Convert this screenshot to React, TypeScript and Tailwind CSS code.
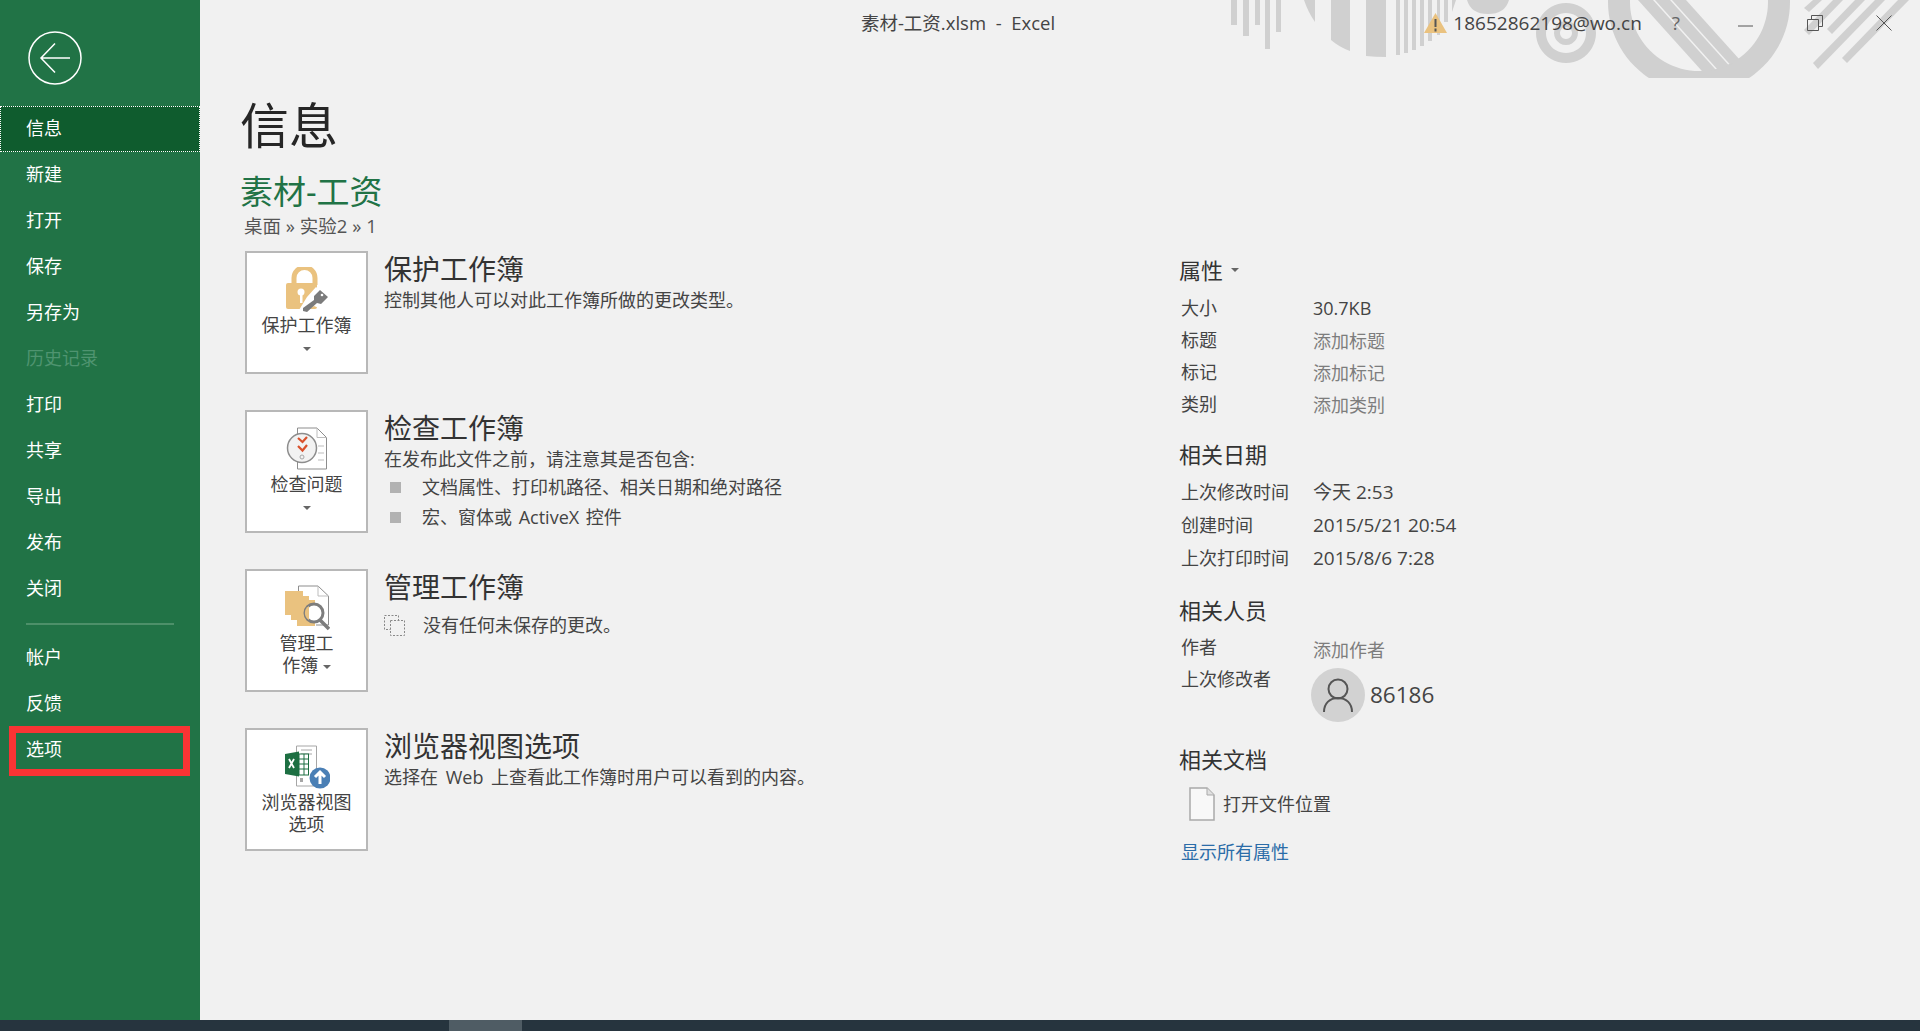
import React from "react";

const FONT = "font-['Open_Sans','Noto_Sans_CJK_SC',sans-serif]";

function Caret({ className = "" }: { className?: string }) {
  return <span className={`inline-block w-0 h-0 border-l-[4px] border-r-[4px] border-t-[4px] border-l-transparent border-r-transparent border-t-[#666] ${className}`} />;
}

function LockIcon() {
  return (
    <svg width="44" height="46" viewBox="0 0 44 46" className="block">
      <path d="M9 18v-7a10.500 10.500 0 0 1 21 0v7" fill="none" stroke="#eac27f" strokeWidth="5" />
      <rect x="1" y="16" width="31" height="26" rx="2" fill="#eac27f" />
      <circle cx="16" cy="25" r="3.500" fill="#fff" />
      <rect x="15" y="26" width="2.500" height="10" fill="#fff" />
      <path d="M22 30l9-10 12 10-9 11-5-2-11 7-4-3z" fill="#fff" />
      <path d="M29 29l6-6 8 7-7 7-4-1-10 9-4-1 0-3 11-8z" fill="#7b7b7b" />
      <circle cx="37" cy="28" r="1.300" fill="#fff" />
    </svg>
  );
}

function InspectIcon() {
  return (
    <svg width="42" height="44" viewBox="0 0 42 44" className="block">
      <path d="M11.500 1H31l9.500 9.500V42H11.500z" fill="#fff" stroke="#8d8d8d" />
      <path d="M31 1v9.500h9.500M32 19h6M32 26h6M32 33h6" fill="none" stroke="#bdbdbd" />
      <circle cx="16" cy="21" r="14.500" fill="#f2f2f2" stroke="#8d8d8d" strokeWidth="1.500" />
      <path d="M12 11l4.500 4L21 10M12 19l4.500 4.500L21 18" fill="none" stroke="#d9512c" strokeWidth="2.200" />
      <circle cx="16" cy="30" r="2" fill="none" stroke="#a6a6a6" />
    </svg>
  );
}

function ManageIcon() {
  return (
    <svg width="46" height="46" viewBox="0 0 46 46" className="block">
      <path d="M14.500 1H34l10.500 10V40H14.500z" fill="#fff" stroke="#8d8d8d" />
      <path d="M34 1v10h10.500" fill="none" stroke="#bdbdbd" />
      <rect x="1" y="6" width="18" height="24" fill="#eac27f" />
      <rect x="7" y="11" width="19" height="25" fill="#fff" />
      <rect x="7" y="11" width="18" height="24" fill="#eac27f" />
      <rect x="13" y="15" width="19" height="26" fill="#fff" />
      <rect x="13" y="15" width="18" height="26" fill="#eac27f" />
      <circle cx="30" cy="28" r="9" fill="#fff" stroke="#7d7d7d" strokeWidth="3" />
      <path d="M25 21a8 8 0 0 0 0 14v-14z" fill="#eac27f" />
      <path d="M36 35l9 9" stroke="#7d7d7d" strokeWidth="3.500" />
    </svg>
  );
}

function BrowserIcon() {
  return (
    <svg width="46" height="44" viewBox="0 0 46 44" className="block">
      <path d="M12.500 1h20v40h-20z" fill="#fff" stroke="#a6a6a6" />
      <path d="M17 5h11M17 9h11" stroke="#a6a6a6" />
      <rect x="16" y="33" width="3" height="4" fill="#a6a6a6" />
      <path d="M1 9l14-2.500v25L1 29z" fill="#1d6f42" />
      <rect x="15" y="9" width="9.500" height="21" fill="#fff" stroke="#1d6f42" />
      <path d="M15 14h10M15 19h10M15 24h10M20 9v21" stroke="#1d6f42" />
      <path d="M5 14l5 9M10 14l-5 9" stroke="#fff" strokeWidth="1.800" />
      <circle cx="36" cy="33" r="10.500" fill="#4a7fb5" />
      <path d="M36 39v-11M31 32l5-5 5 5" fill="none" stroke="#fff" strokeWidth="3" />
    </svg>
  );
}

function Decoration() {
  return (
    <svg width="720" height="80" viewBox="1200 0 720 80" className="absolute right-0 top-0 pointer-events-none">
      <defs>
        <clipPath id="inner"><circle cx="1699" cy="2" r="70" /></clipPath>
        <clipPath id="cut"><rect x="1600" y="0" width="200" height="78" /></clipPath>
      </defs>
      <g fill="#d0d0d0">
        <rect x="1231" y="0" width="6" height="25" />
        <rect x="1243" y="0" width="6" height="36" />
        <rect x="1255" y="0" width="5" height="25" />
        <rect x="1265" y="0" width="5" height="49" />
        <rect x="1276" y="0" width="5" height="32" />
        <path d="M1304 0h11v22q-7-10-11-22z" />
        <path d="M1331 0h19v51q-11-4-19-11z" />
        <path d="M1366 0h20v57q-11 0-20-1z" />
        <rect x="1396" y="0" width="4" height="55" />
        <rect x="1404" y="0" width="4" height="53" />
        <rect x="1412" y="0" width="4" height="50" />
        <rect x="1420" y="0" width="4" height="46" />
        <rect x="1428" y="0" width="4" height="41" />
        <rect x="1437" y="0" width="3" height="35" />
        <rect x="1444" y="0" width="4" height="22" />
        <path d="M1452 0h4l-4 12z" />
        <path d="M1467 0h42q-4 14-21 14t-21-14z" />
        <path fillRule="evenodd" d="M1566 3a30 30 0 1 0 .01 0zM1566 13a20 20 0 1 1-.01 0zM1566 21a12 12 0 1 0 .01 0zM1566 27a6 6 0 1 1-.01 0z" />
        <g clipPath="url(#cut)">
          <path fillRule="evenodd" d="M1699-89a91 91 0 1 0 .01 0zM1699-67a69 69 0 1 1-.01 0z" />
        </g>
        <g clipPath="url(#inner)">
          <path d="M1638 0h15l72 80h-15z" />
          <path d="M1655 0h15l72 80h-15z" />
          <path d="M1672 0h14l72 80h-14z" />
        </g>
        <path d="M1813 0h9l-13 12-5-4z" />
        <path d="M1833 0h10l-34 35-5-5z" />
        <path d="M1855 0h10l-33 34-5-5z" />
        <path d="M1875 0h10l-67 69-5-6z" />
        <path d="M1898 0h11l-62 63-5-5z" />
      </g>
    </svg>
  );
}

function Action({ icon, label, title, children, labelNode }: { icon: React.ReactNode; label?: string; title: string; children: React.ReactNode; labelNode?: React.ReactNode }) {
  return (
    <div className="flex h-[159px]">
      <div className="w-[123px] h-[123px] bg-white border-2 border-[#b8b8b8] flex flex-col items-center pt-[14px] shrink-0 text-[18px] leading-[24px] text-[#444]">
        <div className="h-[46px] flex items-center justify-center">{icon}</div>
        {labelNode ?? (
          <>
            <div className="h-[24px]">{label}</div>
            <Caret className="mt-[10px]" />
          </>
        )}
      </div>
      <div className="ml-[16px]">
        <div className="text-[28px] leading-[36px] text-[#333]">{title}</div>
        {children}
      </div>
    </div>
  );
}

function PropRow({ label, value, muted, date }: { label: string; value: string; muted?: boolean; date?: boolean }) {
  return (
    <div className={`flex items-center text-[18px] ${date ? "h-[33px]" : "h-[32px]"}`}>
      <div className="w-[132px] ml-[2px] text-[#444]">{label}</div>
      <div className={`${muted ? "text-[#7d7d7d] pt-[2px]" : "text-[#444]"} ${date ? "text-[19px]" : ""}`}>{value}</div>
    </div>
  );
}

const navTop = ["新建", "打开", "保存", "另存为"];
const navMid = ["打印", "共享", "导出", "发布", "关闭"];

function NavItem({ label, muted }: { label: string; muted?: boolean }) {
  return <div className={`h-[46px] flex items-center pl-[26px] text-[18px] ${muted ? "text-[#4f9470]" : "text-white"}`}>{label}</div>;
}

export default function App() {
  return (
    <div className={`h-[1031px] w-[1920px] overflow-hidden flex flex-col bg-[#f1f1f1] ${FONT}`}>
      <div className="flex flex-1 min-h-0">
        <aside className="w-[200px] bg-[#217346] shrink-0 flex flex-col">
          <div className="h-[105.5px] pl-[28px] pt-[31px]">
            <svg width="54" height="54" viewBox="0 0 54 54" className="block">
              <circle cx="27" cy="27" r="26" fill="none" stroke="#fff" strokeWidth="1.500" />
              <path d="M13 27h29M27 12.500L13 27l14 14.500" fill="none" stroke="#fff" strokeWidth="1.500" />
            </svg>
          </div>
          <div className="h-[46px] flex items-center pl-[25px] text-[18px] text-white bg-[#0f5c2e] border border-dotted border-white">信息</div>
          {navTop.map((n) => <NavItem key={n} label={n} />)}
          <NavItem label="历史记录" muted />
          {navMid.map((n) => <NavItem key={n} label={n} />)}
          <div className="mx-[26px] w-[148px] h-[2px] bg-[#4d9069] mt-[11px] mb-[10px]" />
          <NavItem label="帐户" />
          <NavItem label="反馈" />
          <div className="relative">
            <NavItem label="选项" />
            <div className="absolute left-[9px] top-[-0.5px] w-[181px] h-[50px] border-[7px] border-[#f83434]" />
          </div>
        </aside>

        <main className="relative flex-1 min-w-0">
          <Decoration />
          <div className="relative h-[46px] flex items-center justify-center text-[18.5px] text-[#444] pr-[204px] whitespace-pre">素材-工资.xlsm  -  Excel</div>
          <div className="absolute top-0 right-0 h-[46px] flex items-center text-[#444]">
            <svg width="23" height="20" viewBox="0 0 23 20" className="mr-[6px]">
              <path d="M11.500 0l11.500 20H0z" fill="#eac27f" />
              <path d="M11.500 6v8M11.500 15.500v3" stroke="#555" strokeWidth="2" />
            </svg>
            <span className="text-[19px]">18652862198@wo.cn</span>
            <span className="text-[19px] ml-[30px] text-[#666]">?</span>
            <svg width="15" height="18" viewBox="0 0 15 18" className="ml-[58px]"><path d="M0 12h15" stroke="#555" /></svg>
            <svg width="16" height="16" viewBox="0 0 16 16" className="ml-[54px]"><path d="M.5 4.500h11v11H.5zM4.500 4V.5h11v11H12" fill="none" stroke="#555" /></svg>
            <svg width="16" height="16" viewBox="0 0 16 16" className="ml-[53px] mr-[28px]"><path d="M.5.5l15 15M15.500.5l-15 15" stroke="#555" /></svg>
          </div>

          <div className="pl-[40px] pr-[40px]">
            <h1 className="text-[49px] leading-[64px] text-[#262626] mt-[47px]">信息</h1>
            <div className="text-[33px] leading-[44px] text-[#217346] mt-[13px]">素材-工资</div>
            <div className="text-[18.5px] leading-[24px] text-[#555] ml-[4px]">桌面 » 实验2 » 1</div>

            <div className="flex mt-[13px]">
              <div className="w-[939px] pl-[5px] shrink-0">
                <Action icon={<LockIcon />} label="保护工作簿" title="保护工作簿">
                  <div className="text-[18px] leading-[24px] text-[#444] mt-[1px]">控制其他人可以对此工作簿所做的更改类型。</div>
                </Action>
                <Action icon={<InspectIcon />} label="检查问题" title="检查工作簿">
                  <div className="text-[18px] leading-[24px] text-[#444] mt-[1px]">在发布此文件之前，请注意其是否包含:</div>
                  <div className="flex items-center text-[18px] h-[30px] text-[#444] mt-[1px]">
                    <span className="w-[11px] h-[11px] bg-[#b2b2b2] ml-[6px] mr-[21px]" />文档属性、打印机路径、相关日期和绝对路径
                  </div>
                  <div className="flex items-center text-[18px] h-[30px] text-[#444] [word-spacing:2px]">
                    <span className="w-[11px] h-[11px] bg-[#b2b2b2] ml-[6px] mr-[21px]" />宏、窗体或 ActiveX 控件
                  </div>
                </Action>
                <Action
                  icon={<ManageIcon />}
                  title="管理工作簿"
                  labelNode={
                    <div className="text-center mt-[1px] leading-[22px]">
                      <div>管理工</div>
                      <div>作簿 <Caret className="align-middle" /></div>
                    </div>
                  }
                >
                  <div className="flex items-center h-[30px] text-[18px] text-[#444] mt-[5px]">
                    <svg width="22" height="24" viewBox="0 0 22 24" className="mr-[17px]">
                      <path d="M.5 2.500h14v14H.5z" fill="none" stroke="#888" strokeDasharray="2 1.500" />
                      <path d="M6.500 7.500h14v15h-14z" fill="#f1f1f1" stroke="#888" strokeDasharray="2 1.500" />
                    </svg>
                    没有任何未保存的更改。
                  </div>
                </Action>
                <Action
                  icon={<BrowserIcon />}
                  title="浏览器视图选项"
                  labelNode={
                    <div className="text-center mt-[1px] leading-[22px]">
                      <div>浏览器视图</div>
                      <div>选项</div>
                    </div>
                  }
                >
                  <div className="text-[18px] leading-[24px] text-[#444] mt-[1px] [word-spacing:3px]">选择在 Web 上查看此工作簿时用户可以看到的内容。</div>
                </Action>
              </div>

              <div className="w-[400px] mt-[4px]">
                <div className="text-[22px] leading-[30px] text-[#333] flex items-center mb-[7px]">属性<Caret className="ml-[8px]" /></div>
                <PropRow label="大小" value="30.7KB" />
                <PropRow label="标题" value="添加标题" muted />
                <PropRow label="标记" value="添加标记" muted />
                <PropRow label="类别" value="添加类别" muted />
                <div className="text-[22px] leading-[30px] text-[#333] mt-[19px] mb-[7px]">相关日期</div>
                <PropRow label="上次修改时间" value="今天 2:53" date />
                <PropRow label="创建时间" value="2015/5/21 20:54" date />
                <PropRow label="上次打印时间" value="2015/8/6 7:28" date />
                <div className="text-[22px] leading-[30px] text-[#333] mt-[20px] mb-[6px]">相关人员</div>
                <div className="flex items-center text-[18px] h-[32px]">
                  <div className="w-[132px] ml-[2px] text-[#444]">作者</div>
                  <div className="text-[#7d7d7d] pt-[6px]">添加作者</div>
                </div>
                <div className="flex text-[18px] text-[#444] mt-[5px]">
                  <div className="w-[132px] ml-[2px] mt-[-2px]">上次修改者</div>
                  <div className="flex items-center">
                    <div className="w-[54px] h-[54px] rounded-full bg-[#d2d2d2] flex items-center justify-center ml-[-2px]">
                      <svg width="32" height="36" viewBox="0 0 32 36">
                        <circle cx="16" cy="12" r="9.500" fill="none" stroke="#555" strokeWidth="2" />
                        <path d="M2 35c0-9 6-14 14-14s14 5 14 14" fill="none" stroke="#555" strokeWidth="2" />
                      </svg>
                    </div>
                    <span className="text-[22.5px] ml-[5px]">86186</span>
                  </div>
                </div>
                <div className="text-[22px] leading-[30px] text-[#333] mt-[22px]">相关文档</div>
                <div className="flex items-center h-[44px] ml-[10px] mt-[8px] text-[18px] text-[#444]">
                  <svg width="26" height="34" viewBox="0 0 26 34" className="mr-[8px]">
                    <path d="M1 1h17l7 7v25H1z" fill="#f8f8f8" stroke="#a9a9a9" strokeWidth="1.500" />
                    <path d="M18 1v7h7" fill="#e0e0e0" stroke="#a9a9a9" />
                  </svg>
                  打开文件位置
                </div>
                <div className="text-[18px] text-[#2b6ca8] ml-[2px] mt-[13px]">显示所有属性</div>
              </div>
            </div>
          </div>
        </main>
      </div>
      <div className="h-[11px] shrink-0 bg-[#26343e] relative">
        <div className="absolute left-[449px] top-0 w-[73px] h-[11px] bg-[#4f5c64]" />
      </div>
    </div>
  );
}
